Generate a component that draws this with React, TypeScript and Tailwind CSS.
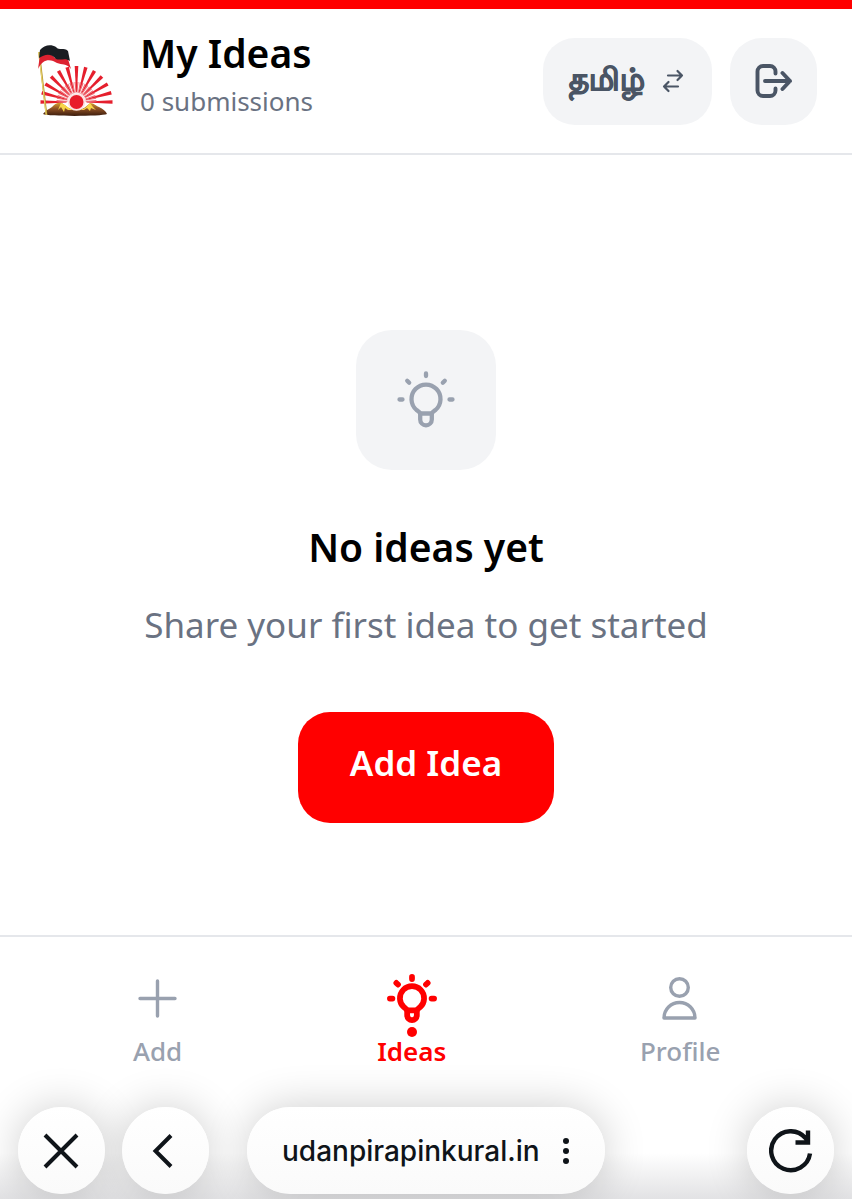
import React from "react";

const rays = Array.from({ length: 13 }, (_, i) => i * 15);
const innerRays = Array.from({ length: 24 }, (_, i) => i * 7.5 + 3.75);

function PartyEmblem() {
  return (
    <svg viewBox="0 0 80 76" className="h-[76px] w-20 shrink-0" role="img" aria-label="Rising sun">
      <defs>
        <linearGradient id="hill" x1="0" y1="0" x2="0" y2="1">
          <stop offset="0" stopColor="#d9a02c" />
          <stop offset="0.45" stopColor="#8f5226" />
          <stop offset="1" stopColor="#3c1c0d" />
        </linearGradient>
      </defs>
      <g transform="translate(41.5 59)">
        {rays.map((a) => (
          <polygon key={a} points="-10,-0.5 -36,-1.8 -36,1.8 -10,0.5" fill="#e51f2d" transform={`rotate(${a})`} />
        ))}
        {innerRays.map((a) => (
          <polygon key={a} points="-9,-0.3 -20,-0.7 -20,0.7 -9,0.3" fill="#ee6a72" transform={`rotate(${a})`} />
        ))}
      </g>
      <path d="M8 71C11 67 14 66 17 64C20 60 24 59 27 60C31 63 35 67 41.500 67C48 67 52 63 55 60C59 60 61 63 64 64C68 66 71 68 72 71C66 73.500 13 73.500 8 71Z" fill="url(#hill)" />
      <path d="M26 60l4 2 4 3 4 2-5 0-3-2-1 4-3-5-3 3zM45 67l5-2 5-5 3 4 3 3-5-2-1 3-3-3-3 2z" fill="#f8d648" />
      <circle cx="41.500" cy="59" r="8.800" fill="#fbe3e3" />
      <circle cx="41.500" cy="59" r="7" fill="#e81c2a" />
      <path d="M4 9l7.500 63" stroke="#b3922a" strokeWidth="1.800" />
      <path d="M3.700 9l7.500 63" stroke="#f2df78" strokeWidth="0.900" />
      <path d="M5 12C11 10 16 10 20 15C25 18 30 13 33 16L36 26C31 20 27 22 22 20C16 16 8 15 3 26Z" fill="#dd2230" />
      <path d="M5 7C9 2 16 1 21 4C24 8 29 4 33 8L35 18C30 14 26 18 21 16C16 10 10 11 4 15Z" fill="#1a1d22" />
    </svg>
  );
}

function BulbIcon({ className, weight }: { className: string; weight: number }) {
  return (
    <svg viewBox="0 0 60 60" className={className} fill="none" stroke="currentColor" strokeWidth={weight} strokeLinecap="round" strokeLinejoin="round" aria-hidden="true">
      <path d="M24.2 43.5C23.500 42 22 41.200 20.500 40A14.500 14.500 0 1 1 39.500 40C38 41.200 36.500 42 35.800 43.500Z" />
      <path d="M24.2 43.5v6a5.800 5.800 0 0 0 11.600 0v-6" />
      <path d="M30 3.500v2.500M3.500 29.500h3M53.500 29.500h3M11.200 10.700l2 2M48.800 10.700l-2 2" />
    </svg>
  );
}

const ROUND = "relative z-10 flex size-[87px] shrink-0 items-center justify-center rounded-full bg-linear-to-b from-white to-[#fafafa]";
const SHADOW = "flex rounded-full shadow-[0_0_44px_rgba(0,0,0,0.2)]";

export default function App() {
  return (
    <div className="flex min-h-screen flex-col overflow-x-hidden bg-white font-['Noto_Sans',sans-serif]">
      <header className="flex items-center justify-between border-t-[9px] border-b-2 border-t-[#ff0000] border-b-gray-200 px-[35px] py-5">
        <div className="flex items-center gap-[25px]">
          <PartyEmblem />
          <div className="flex flex-col pb-2">
            <h1 className="text-[39px] leading-[48px] font-semibold text-black">My Ideas</h1>
            <p className="text-[26px] leading-[48px] text-gray-500">0 submissions</p>
          </div>
        </div>
        <div className="flex items-center gap-[18px]">
          <button type="button" className="flex h-[87px] items-center gap-[17px] rounded-[32px] bg-gray-100 pr-7 pl-[26px] text-gray-600">
            <span lang="ta" className="pb-1.5 text-[31px] leading-9 font-semibold [-webkit-text-stroke:1px_currentColor]">தமிழ்</span>
            <svg viewBox="0 0 22 24" className="h-6 w-[22px]" fill="none" stroke="currentColor" strokeWidth="2.200" strokeLinecap="round" strokeLinejoin="round" aria-hidden="true">
              <path d="M6 6.500h14M15.500 2l4.500 4.500-4.500 4.500M16 17.500H2M6.500 13L2 17.500 6.500 22" />
            </svg>
          </button>
          <button type="button" aria-label="Log out" className="flex size-[87px] items-center justify-center rounded-[32px] bg-gray-100 text-gray-600">
            <svg viewBox="0 0 40 36" className="h-9 w-10" fill="none" stroke="currentColor" strokeWidth="3.900" strokeLinecap="round" strokeLinejoin="round" aria-hidden="true">
              <path d="M21.500 10.500V8.500a5.500 5.500 0 0 0-5.500-5.500H9A5.500 5.500 0 0 0 3.500 8.500v19A5.500 5.500 0 0 0 9 33h7a5.500 5.500 0 0 0 5.500-5.500v-2M11 18H36M28.500 10l7.500 8-7.500 8" />
            </svg>
          </button>
        </div>
      </header>

      <main className="flex flex-1 flex-col items-center px-6 pt-[175px] pb-28 text-center">
        <div className="flex size-[140px] items-center justify-center rounded-[36px] bg-gray-100 text-gray-400">
          <BulbIcon className="size-[60px]" weight={4.3} />
        </div>
        <h2 className="mt-[51px] text-[39px] leading-[52px] font-semibold text-black">No ideas yet</h2>
        <p className="mt-[26px] text-[35px] leading-[52px] text-gray-500">Share your first idea to get started</p>
        <button type="button" className="mt-[61px] rounded-[32px] bg-[#ff0000] px-[52px] pt-[26px] pb-[35px] text-[35px] leading-[50px] font-semibold text-white">
          Add Idea
        </button>
      </main>

      <nav aria-label="Main" className="flex justify-evenly border-t-2 border-gray-200 pt-9 pb-[38px] text-[26px] leading-9">
        <a href="#add" className="flex flex-col items-center px-[62px] font-medium text-gray-400">
          <svg viewBox="0 0 52 52" className="size-[52px]" stroke="currentColor" strokeWidth="3.400" strokeLinecap="round" aria-hidden="true">
            <path d="M25.500 8v35M8 25.500h35" />
          </svg>
          <span className="mt-2">Add</span>
        </a>
        <a href="#ideas" aria-current="page" className="relative flex flex-col items-center px-[62px] font-semibold text-[#ff0000]">
          <span className="flex size-[52px] items-center justify-center">
            <BulbIcon className="size-[50px]" weight={6.9} />
          </span>
          <span className="absolute top-[54px] size-2.5 rounded-full bg-[#ff0000]" />
          <span className="mt-2">Ideas</span>
        </a>
        <a href="#profile" className="flex flex-col items-center px-[62px] font-medium text-gray-400">
          <svg viewBox="0 0 52 52" className="size-[52px]" fill="none" stroke="currentColor" strokeWidth="3.400" strokeLinejoin="round" aria-hidden="true">
            <circle cx="25.500" cy="14.500" r="8.800" />
            <path d="M10 45a15.500 15.500 0 0 1 31 0z" />
          </svg>
          <span className="mt-2">Profile</span>
        </a>
      </nav>

      <footer className="flex items-center justify-between bg-linear-to-b from-transparent from-50% to-[#e2e2e4] px-[18px] pb-[5px] text-[#0f1419]">
        <div className="flex items-center">
          <div className={SHADOW}>
            <button type="button" aria-label="Close" className={ROUND}>
              <svg viewBox="0 0 40 40" className="size-10" stroke="currentColor" strokeWidth="4" aria-hidden="true">
                <path d="M3 4l32 32M35 4L3 36" />
              </svg>
            </button>
          </div>
          <div className={`${SHADOW} ml-[17px]`}>
            <button type="button" aria-label="Back" className={ROUND}>
              <svg viewBox="0 0 40 40" className="size-10" fill="none" stroke="currentColor" strokeWidth="4" aria-hidden="true">
                <path d="M25 4.500L9.500 20 25 35.500" />
              </svg>
            </button>
          </div>
          <div className={`${SHADOW} ml-[38px]`}>
            <div className="relative z-10 flex h-[87px] items-center gap-[22px] rounded-full bg-linear-to-b from-white to-[#fafafa] px-[35px]">
              <span className="font-['Inter',sans-serif] text-[28px] leading-10 font-medium">udanpirapinkural.in</span>
              <button type="button" aria-label="More options">
                <svg viewBox="0 0 8 28" className="h-7 w-2" fill="currentColor" aria-hidden="true">
                  <circle cx="4" cy="4" r="3" />
                  <circle cx="4" cy="14" r="3" />
                  <circle cx="4" cy="24" r="3" />
                </svg>
              </button>
            </div>
          </div>
        </div>
        <div className={SHADOW}>
          <button type="button" aria-label="Reload" className={ROUND}>
            <svg viewBox="0 0 44 44" className="size-11" fill="none" stroke="currentColor" strokeWidth="4.400" aria-hidden="true">
              <path d="M41 24.500A19.500 19.500 0 1 1 36.500 9L39.500 12.500M39 1.500v12H26.500" />
            </svg>
          </button>
        </div>
      </footer>
    </div>
  );
}
